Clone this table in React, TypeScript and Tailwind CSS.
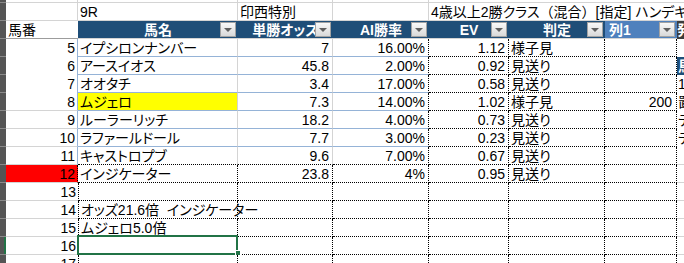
import React from 'react';

type Horse = {
  no: number;
  name: string;
  odds: string;
  ai: string;
  ev: string;
  judge: string;
  extra?: string;
};

const horses: Horse[] = [
  { no: 5, name: 'イプシロンナンバー', odds: '7', ai: '16.00%', ev: '1.12', judge: '様子見' },
  { no: 6, name: 'アースイオス', odds: '45.8', ai: '2.00%', ev: '0.92', judge: '見送り' },
  { no: 7, name: 'オオタチ', odds: '3.4', ai: '17.00%', ev: '0.58', judge: '見送り' },
  { no: 8, name: 'ムジェロ', odds: '7.3', ai: '14.00%', ev: '1.02', judge: '様子見', extra: '200' },
  { no: 9, name: 'ルーラーリッチ', odds: '18.2', ai: '4.00%', ev: '0.73', judge: '見送り' },
  { no: 10, name: 'ラファールドール', odds: '7.7', ai: '3.00%', ev: '0.23', judge: '見送り' },
  { no: 11, name: 'キャストロプブ', odds: '9.6', ai: '7.00%', ev: '0.67', judge: '見送り' },
  { no: 12, name: 'インジケーター', odds: '23.8', ai: '4%', ev: '0.95', judge: '見送り' },
];

// far-right column H, only a sliver of it shows
const sliver: { text: string; className: string }[] = [
  { text: '', className: '' },
  { text: '馬', className: 'bg-[#1f4e78] text-white font-bold' },
  { text: '1', className: '' },
  { text: '置', className: '' },
  { text: 'テ', className: '' },
  { text: 'テ', className: '' },
  { text: '', className: 'border-b border-[#d4d4d4]' },
  { text: '', className: 'border-b border-[#d4d4d4]' },
];

const dotB = 'border-b border-b-black [border-bottom-style:dotted]';
const dotR = 'border-r border-r-black [border-right-style:dotted]';
const dotL = 'border-l border-l-black [border-left-style:dotted]';

function Strip({ active }: { active?: boolean }) {
  return (
    <div className="flex w-[6px] shrink-0 justify-end border-b border-b-[#8a8a8a] bg-[#555555]">
      {active && <div className="w-[2px] bg-[#217346]" />}
    </div>
  );
}

function FilterButton() {
  return (
    <span className="absolute right-[2px] top-[1px] flex h-[15px] w-[16px] items-center justify-center border border-[#a3a3a3] bg-gradient-to-b from-[#f8f8f8] to-[#d9d9d9]">
      <span className="h-0 w-0 border-x-[4px] border-t-[4px] border-x-transparent border-t-[#5f5f5f]" />
    </span>
  );
}

function HeaderCell({ label, width, align = 'center', light }: { label: string; width: string; align?: 'center' | 'left'; light?: boolean }) {
  return (
    <div
      className={`relative shrink-0 overflow-hidden whitespace-nowrap font-bold text-white ${width} ${
        light ? 'bg-[#4f81bd] pl-[4px]' : 'bg-[#1f4e78]'
      } ${align === 'center' ? 'text-center' : 'text-left'} border-b border-[#d4d4d4]`}
    >
      {label}
      <FilterButton />
    </div>
  );
}

export default function App() {
  return (
    <div className="h-[263px] w-[684px] overflow-hidden bg-white font-['Liberation_Sans','Noto_Sans_CJK_JP',sans-serif] text-[14px] leading-[18px] text-black [font-feature-settings:'palt']">
      {/* sliver of the row above */}
      <div className="flex h-[3px]">
        <div className="w-[6px] shrink-0 border-b border-b-[#8a8a8a] bg-[#555555]" />
        <div className="w-[72px] shrink-0 border-b border-r border-[#d4d4d4]" />
        <div className="w-[160px] shrink-0 border-b border-r border-[#d4d4d4]" />
        <div className="w-[95px] shrink-0 border-b border-r border-[#d4d4d4]" />
        <div className="w-[96px] shrink-0 border-b border-r border-[#d4d4d4]" />
        <div className="w-[80px] shrink-0 border-b border-[#d4d4d4]" />
        <div className="flex-1 border-b border-[#d4d4d4]" />
      </div>

      {/* race title row */}
      <div className="flex h-[18px]">
        <Strip />
        <div className="w-[72px] shrink-0 border-b border-r border-[#d4d4d4]" />
        <div className="w-[160px] shrink-0 border-b border-r border-[#d4d4d4] pl-[2px]">9R</div>
        <div className="w-[95px] shrink-0 border-b border-r border-[#d4d4d4] pl-[2px]">印西特別</div>
        <div className="w-[96px] shrink-0 border-b border-r border-[#d4d4d4]" />
        <div className="relative z-10 w-[80px] shrink-0 whitespace-nowrap border-b border-[#d4d4d4] pl-[2px]">
          4歳以上2勝クラス<span className="[font-feature-settings:normal]">（混合）</span>[指定] ハンデキャップ
        </div>
        <div className="flex-1 border-b border-[#d4d4d4]" />
      </div>

      {/* table header */}
      <div className="flex h-[18px]">
        <Strip />
        <div className="w-[72px] shrink-0 border-b border-[#9c9c9c] pl-[2px]">馬番</div>
        <HeaderCell label="馬名" width="w-[160px]" />
        <HeaderCell label="単勝オッズ" width="w-[95px]" />
        <HeaderCell label="AI勝率" width="w-[96px]" />
        <HeaderCell label="EV" width="w-[80px]" />
        <HeaderCell label="判定" width="w-[96px]" />
        <HeaderCell label="列1" width="w-[72px]" align="left" light />
        <div className="w-[7px] shrink-0 overflow-hidden whitespace-nowrap bg-[#3c3c3c] font-bold text-white">発走</div>
      </div>

      {/* horses */}
      {horses.map((h, i) => {
        const isLast = i === horses.length - 1;
        const dottedBottom = i >= horses.length - 2;
        const tableB = dottedBottom ? dotB : 'border-b border-b-[#95b3d7]';
        return (
          <div key={h.no} className="flex h-[18px]">
            <Strip />
            <div
              className={`w-[72px] shrink-0 pr-[2px] text-right ${i >= 3 ? 'border-b border-b-[#d4d4d4]' : ''} ${
                isLast ? `bg-[#ff0000] ${dotR}` : 'border-r border-r-[#95b3d7]'
              }`}
            >
              {h.no}
            </div>
            <div className={`w-[160px] shrink-0 overflow-hidden whitespace-nowrap pl-[2px] ${tableB} ${isLast ? dotR : 'border-r border-r-[#d4d4d4]'} ${h.no === 8 ? 'bg-[#ffff00]' : ''}`}>
              {h.name}
            </div>
            <div className={`w-[95px] shrink-0 pr-[3px] text-right ${tableB} ${isLast ? dotR : 'border-r border-r-[#d4d4d4]'}`}>{h.odds}</div>
            <div className={`w-[96px] shrink-0 pr-[3px] text-right ${tableB} ${dotR}`}>{h.ai}</div>
            <div className={`w-[80px] shrink-0 pr-[3px] text-right ${dotB} ${dotR}`}>{h.ev}</div>
            <div className={`w-[96px] shrink-0 pl-[2px] ${dotB} ${dotR}`}>{h.judge}</div>
            <div className={`w-[72px] shrink-0 pr-[4px] text-right ${dotB} ${dotR}`}>{h.extra ?? ''}</div>
            <div className={`w-[7px] shrink-0 overflow-hidden whitespace-nowrap pl-[1px] ${sliver[i].className}`}>{sliver[i].text}</div>
          </div>
        );
      })}

      {/* free rows below the table */}
      {[13, 14, 15, 16, 17].map((n) => (
        <div key={n} className="flex h-[18px]">
          <Strip active={n === 16} />
          <div className="w-[72px] shrink-0 border-b border-b-[#d4d4d4] pr-[2px] text-right">{n}</div>
          <div className={`relative z-10 w-[160px] shrink-0 whitespace-pre pl-[2px] ${dotB} ${dotR} ${dotL}`}>
            {n === 14 && 'オッズ21.6倍  インジケーター'}
            {n === 15 && 'ムジェロ5.0倍'}
            {n === 16 && (
              <>
                <span className="absolute -bottom-[1px] -left-[2px] -right-[1px] -top-[2px] border-2 border-[#217346]" />
                <span className="absolute -bottom-[2px] -right-[4px] h-[6px] w-[6px] border border-white bg-[#217346]" />
              </>
            )}
          </div>
          <div className={`w-[95px] shrink-0 ${dotB} ${dotR}`} />
          <div className={`w-[96px] shrink-0 ${dotB} ${dotR}`} />
          <div className={`w-[80px] shrink-0 ${dotB} ${dotR}`} />
          <div className={`w-[96px] shrink-0 ${dotB} ${dotR}`} />
          <div className={`w-[72px] shrink-0 ${dotB} ${dotR}`} />
          <div className="w-[7px] shrink-0 border-b border-b-[#d4d4d4]" />
        </div>
      ))}
    </div>
  );
}
